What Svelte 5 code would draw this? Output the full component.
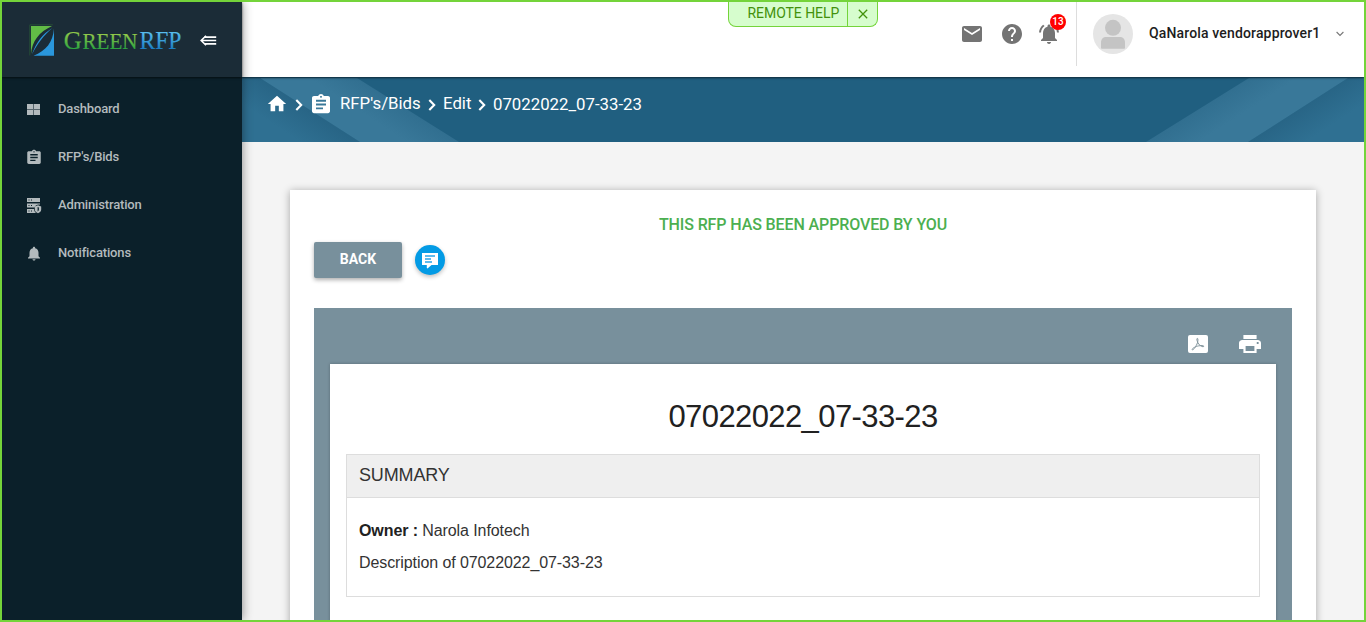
<script>
  const assignment = 'M19 3h-4.18C14.4 1.84 13.3 1 12 1c-1.3 0-2.4.84-2.82 2H5c-1.1 0-2 .9-2 2v14c0 1.1.9 2 2 2h14c1.1 0 2-.9 2-2V5c0-1.1-.9-2-2-2zm-7 0c.55 0 1 .45 1 1s-.45 1-1 1-1-.45-1-1 .45-1 1-1zm2 14H7v-2h7v2zm3-4H7v-2h10v2zm0-4H7V7h10v2z';
  const mail = 'M20 4H4c-1.1 0-1.99.9-1.99 2L2 18c0 1.1.9 2 2 2h16c1.1 0 2-.9 2-2V6c0-1.1-.9-2-2-2zm0 4l-8 5-8-5V6l8 5 8-5v2z';
  const help = 'M12 2C6.48 2 2 6.48 2 12s4.48 10 10 10 10-4.48 10-10S17.52 2 12 2zm1 17h-2v-2h2v2zm2.07-7.75l-.9.92C13.45 12.9 13 13.5 13 15h-2v-.5c0-1.1.45-2.1 1.17-2.83l1.24-1.26c.37-.36.59-.86.59-1.41 0-1.1-.9-2-2-2s-2 .9-2 2H8c0-2.21 1.79-4 4-4s4 1.79 4 4c0 .88-.36 1.68-.93 2.25z';
  const bellActive = 'M7.58 4.08L6.15 2.65C3.75 4.48 2.17 7.3 2.03 10.5h2c.15-2.65 1.51-4.97 3.55-6.42zm12.39 6.42h2c-.15-3.2-1.73-6.02-4.12-7.85l-1.42 1.43c2.02 1.45 3.39 3.77 3.54 6.42zM18 11c0-3.07-1.64-5.64-4.5-6.32V4c0-.83-.67-1.5-1.5-1.5s-1.5.67-1.5 1.5v.68C7.63 5.36 6 7.92 6 11v5l-2 2v1h16v-1l-2-2v-5zm-6 11c.14 0 .27-.01.4-.04.65-.14 1.18-.58 1.44-1.18.1-.24.15-.5.15-.78h-4c.01 1.1.9 2 2.01 2z';
  const bell = 'M12 22c1.1 0 2-.9 2-2h-4c0 1.1.89 2 2 2zm6-6v-5c0-3.07-1.64-5.64-4.5-6.32V4c0-.83-.67-1.5-1.5-1.5s-1.5.67-1.5 1.5v.68C7.63 5.36 6 7.92 6 11v5l-2 2v1h16v-1l-2-2z';
  const print = 'M19 8H5c-1.66 0-3 1.34-3 3v6h4v4h12v-4h4v-6c0-1.66-1.34-3-3-3zm-3 11H8v-5h8v5zm3-7c-.55 0-1-.45-1-1s.45-1 1-1 1 .45 1 1-.45 1-1 1zm-1-9H6v4h12V3z';
  const nav = ['Dashboard', "RFP's/Bids", 'Administration', 'Notifications'];
  const title = '07022022_07-33-23';
</script>

{#snippet chevron()}
  <svg class="chev" width="8" height="12" viewBox="0 0 8 12"><path d="M1.3 1 6.2 6 1.3 11" fill="none" stroke="#fff" stroke-width="2.1" /></svg>
{/snippet}

<div class="frame">
  <aside class="sidebar">
    <div class="brand">
      <svg class="logo" width="162" height="40" viewBox="0 0 162 40">
        <defs>
          <linearGradient id="gg" x1="0" y1="0" x2="0" y2="1"><stop offset=".25" stop-color="#8fc74a" /><stop offset=".8" stop-color="#2ea53f" /></linearGradient>
          <linearGradient id="bg" x1="0" y1="0" x2="0" y2="1"><stop offset=".2" stop-color="#5cc0f0" /><stop offset=".8" stop-color="#1c7fc4" /></linearGradient>
        </defs>
        <path d="M2 2h21C10 8 3 17 2 30z" fill="#62bb46" />
        <path d="M25 4.500v27.200H4.500C17 27 24 18 25 4.500z" fill="#2a97dc" />
        <path d="M3 30.500C7 19 13 10 23.500 4 14.500 11.500 8.500 19.500 3 30.500z" fill="#2a97dc" />
        <path d="M.8 31.500V.8h23" fill="none" stroke="#2d6336" stroke-width=".6" />
        <text x="34.800" y="24.500" fill="url(#gg)" stroke="url(#gg)" font-size="26" textLength="18" lengthAdjust="spacingAndGlyphs">G</text>
        <text x="53.500" y="24.500" fill="url(#gg)" stroke="url(#gg)" font-size="22.500" textLength="55" lengthAdjust="spacingAndGlyphs">REEN</text>
        <text x="110.500" y="24.500" fill="url(#bg)" stroke="url(#bg)" font-size="25.500" textLength="42" lengthAdjust="spacingAndGlyphs">RFP</text>
      </svg>
      <svg class="collapse" width="17" height="12" viewBox="0 0 17 12"><path d="M6 .8 1.2 5.500 6 10.200M4 2.100H16.200M1.500 5.500H16.200M4 8.900H16.200" fill="none" stroke="#fff" stroke-width="1.600" /></svg>
    </div>
    <nav>
      {#each nav as label, i}
        <a class="item" href="#{i}">
          <span class="ico">
            {#if i === 0}
              <svg width="13" height="12" viewBox="0 0 13 12" fill="currentColor"><path d="M0 0h13v11H0z" opacity=".45" /><path d="M0 0h6v5H0zM7 0h6v5H7zM0 6h6v5H0zM7 6h6v5H7z" /></svg>
            {:else if i === 1}
              <svg class="clip" width="18" height="17" viewBox="0 0 24 24" preserveAspectRatio="none" fill="currentColor"><path d={assignment} /></svg>
            {:else if i === 2}
              <svg width="15" height="16" viewBox="0 0 15 16" fill="currentColor"><path fill-rule="evenodd" d="M0 0h13v4H0zM1.500 1.500v1h1v-1zM4 1.500v1h1v-1zM0 5.500h13v1C10.500 6 8.300 7 7.500 9.500H0zM1.500 7v1h1V7zM4 7v1h1V7zM0 11h7c.2 2 1 3 2 4H0zM1.500 12.500v1h1v-1zM4 12.500v1h1v-1zM11 7.300l3.200 1.200v3c0 1.700-1.200 3-3.200 3.800-2-.8-3.200-2.100-3.200-3.800v-3zM10.600 9v4.500c1-.7 1.300-1.300 1.300-2.300V9.500z" /></svg>
            {:else}
              <svg class="bell" width="18" height="17" viewBox="0 0 24 24" preserveAspectRatio="none" fill="currentColor"><path d={bell} /></svg>
            {/if}
          </span>
          <span class="label">{label}</span>
        </a>
      {/each}
    </nav>
  </aside>

  <main>
    <header>
      <div class="actions">
        <svg width="24" height="24" viewBox="0 0 24 24"><path d={mail} /></svg>
        <svg width="24" height="24" viewBox="0 0 24 24"><path d={help} /></svg>
        <span class="alerts"><svg width="24" height="24" viewBox="0 0 24 24"><path d={bellActive} /></svg><b class="badge">13</b></span>
      </div>
      <div class="user">
        <svg width="40" height="40" viewBox="0 0 40 40">
          <circle cx="20" cy="20" r="20" fill="#e5e5e5" />
          <circle cx="20" cy="13.800" r="8" fill="#c4c4c4" />
          <path d="M8 34v-5.500c0-3.500 2-5.500 5.500-5.500h13c3.500 0 5.500 2 5.500 5.500V34q0 .7-.8.7H8.800Q8 34.700 8 34z" fill="#c4c4c4" />
        </svg>
        <span class="name">QaNarola vendorapprover1</span>
        <svg width="8" height="6" viewBox="0 0 8 6"><path d="M.6 1 4 4.500 7.400 1" fill="none" stroke="#777" stroke-width="1.100" /></svg>
      </div>
    </header>

    <div class="banner">
      <svg class="rays" width="1122" height="64" viewBox="0 0 1122 64">
        <defs>
          <linearGradient id="sl" gradientUnits="userSpaceOnUse" x1="66" y1="32" x2="49" y2="58"><stop stop-color="#286586" /><stop offset="1" stop-color="#2f7092" /></linearGradient>
          <linearGradient id="sr" gradientUnits="userSpaceOnUse" x1="1056" y1="32" x2="1073" y2="58"><stop stop-color="#286586" /><stop offset="1" stop-color="#2f7092" /></linearGradient>
          <linearGradient id="tl" gradientUnits="userSpaceOnUse" x1="166" y1="32" x2="151" y2="55"><stop stop-color="#316f90" /><stop offset="1" stop-color="#397899" /></linearGradient>
          <linearGradient id="tr" gradientUnits="userSpaceOnUse" x1="956" y1="32" x2="971" y2="55"><stop stop-color="#316f90" /><stop offset="1" stop-color="#397899" /></linearGradient>
        </defs>
        <path d="M0 0H18L118 64H0z" fill="url(#sl)" />
        <path d="M18 0H115L217 64H118z" fill="url(#tl)" />
        <path d="M1122 0H1106L1006 64H1122z" fill="url(#sr)" />
        <path d="M1007 0H1106L1006 64H904z" fill="url(#tr)" />
      </svg>
      <div class="crumbs">
        <svg class="home" width="22" height="22" viewBox="0 0 24 24" fill="#fff"><path d="M10 20v-6h4v6h5v-8h3L12 3 2 12h3v8z" /></svg>
        {@render chevron()}
        <svg class="doc" width="24" height="23" viewBox="0 0 24 24" preserveAspectRatio="none" fill="#fff"><path d={assignment} /></svg>
        <span class="c1">RFP's/Bids</span>
        {@render chevron()}
        <span class="c2">Edit</span>
        {@render chevron()}
        <span class="c3">{title}</span>
      </div>
    </div>

    <section class="card">
      <div class="approved">THIS RFP HAS BEEN APPROVED BY YOU</div>
      <div class="buttons">
        <button class="back">BACK</button>
        <button class="chat" aria-label="Comments">
          <svg width="16" height="16" viewBox="0 0 16 16"><path d="M0 0h16v12H9.500L5.500 15.500 4.800 15V12H0z" fill="#fff" /><path d="M3 3h10M3 6h6M3 9h7" stroke="#2aa5e8" stroke-width="1.500" /></svg>
        </button>
      </div>
      <div class="viewer">
        <div class="tools">
          <svg width="20" height="18" viewBox="0 0 20 18"><rect width="20" height="18" rx="2" fill="#fff" /><path d="M9.300 3.300C10.300 3.300 10.200 7 8.400 10.200 6.800 13.200 5 15.300 4.200 14.700 3.500 13.800 7 11.600 10.500 10.900 13.500 10.300 16 10.500 15.800 11.400 15.500 12.300 12.500 11.400 10.700 9 9 6.700 8.400 3.600 9.300 3.300z" fill="none" stroke="#82959d" stroke-width="1" /></svg>
          <svg width="22" height="18" viewBox="2 3 20 18" preserveAspectRatio="none" fill="#fff"><path d={print} /></svg>
        </div>
        <article>
          <h1>{title}</h1>
          <div class="summary">
            <h2>SUMMARY</h2>
            <div class="body">
              <p><b>Owner :</b> Narola Infotech</p>
              <p>Description of {title}</p>
            </div>
          </div>
        </article>
      </div>
    </section>
  </main>

  <div class="remote"><span>REMOTE HELP</span><i><svg width="10" height="10" viewBox="0 0 10 10"><path d="M.8.8 9.200 9.200M9.200.8.8 9.200" stroke="#43910c" stroke-width="1.300" /></svg></i></div>
</div>

<style>
  :global(body) { margin: 0; overflow: hidden; }
  .frame, .frame * { box-sizing: border-box; }
  .frame { position: relative; width: 1366px; height: 622px; border: 2px solid #74d43a; display: flex; overflow: hidden; background: #f4f4f4; font-family: Roboto, sans-serif; color: #212121; }
  svg { display: block; flex: none; }
  .sidebar { position: relative; z-index: 2; width: 240px; flex: none; background: #0b202a; box-shadow: 0 0 10px rgba(0,0,0,.45); }
  .brand { height: 75px; background: #1b2c37; box-shadow: 0 1px 2px rgba(0,0,0,.6); display: flex; align-items: flex-start; padding: 22px 0 0 27px; }
  .logo { font-family: "Liberation Serif", serif; stroke-width: .15px; overflow: visible; }
  .collapse { margin: 11px 0 0 9px; }
  nav { padding-top: 7px; }
  .item { height: 48px; display: flex; align-items: center; color: #b3babd; text-decoration: none; font-size: 13px; font-weight: 500; padding-left: 25px; line-height: 16px; }
  .label { padding-top: 2px; letter-spacing: -.15px; }
  .ico { width: 31px; height: 16px; display: flex; align-items: center; margin-top: 3px; }
  .clip { margin-left: -2.5px; }
  .bell { margin-left: -2px; }
  main { width: 1122px; flex: none; display: flex; flex-direction: column; }
  header { height: 75px; flex: none; background: #fff; display: flex; justify-content: flex-end; position: relative; z-index: 1; box-shadow: 0 1px 2px rgba(0,0,0,.6); }
  .actions { display: flex; gap: 16px; padding: 20px 15px 0 0; fill: #747474; }
  .alerts { position: relative; height: 24px; margin-left: -3px; }
  .user { height: 64px; border-left: 1px solid #ddd; width: 288px; display: flex; align-items: center; padding-left: 16px; }
  .name { font-size: 14px; font-weight: 500; width: 172px; margin: -2px 15px 0 16px; color: #1d1d1d; letter-spacing: .15px; white-space: nowrap; }
  .banner { height: 65px; flex: none; background: #205f80; padding-top: 1px; display: grid; }
  .rays, .crumbs { grid-area: 1 / 1; }
  .crumbs { display: flex; align-items: flex-start; color: #fff; font-size: 16.8px; line-height: 20px; padding: 15px 0 0 24px; white-space: nowrap; }
  .home { margin-right: 7px; }
  .chev { margin-top: 6px; }
  .doc { margin: 0 7px 0 6px; }
  .c1 { width: 81px; margin-right: 7px; }
  .c2 { width: 28px; margin: 0 7px 0 7px; }
  .c3 { margin-left: 7px; margin-top: 1px; }
  .card { margin: 48px 48px 0; height: 500px; background: #fff; box-shadow: 0 1px 8px rgba(0,0,0,.32); padding: 25px 24px 0; }
  .approved { height: 27px; line-height: 20px; text-align: center; color: #4caf50; font-weight: 500; font-size: 16px; letter-spacing: -.11px; }
  .buttons { display: flex; gap: 13px; height: 66px; align-items: flex-start; }
  button { border: 0; padding: 0; font-family: inherit; }
  .back { width: 88px; height: 36px; background: #78909c; color: #fff; border-radius: 2px; font-size: 14px; font-weight: 700; padding-bottom: 2px; box-shadow: 0 2px 4px rgba(0,0,0,.32); }
  .chat { width: 30px; height: 30px; border-radius: 50%; background: #039be5; margin-top: 3px; padding-top: 1px; box-shadow: 0 2px 4px rgba(0,0,0,.25); display: flex; align-items: center; justify-content: center; }
  .viewer { background: #78909c; height: 400px; padding: 0 16px; }
  .tools { height: 56px; display: flex; justify-content: flex-end; gap: 31px; padding: 27px 15px 0 0; }
  article { background: #fff; height: 344px; padding: 32px 16px 0; box-shadow: 0 0 3px rgba(0,0,0,.25); font-family: "Liberation Sans", Arial, sans-serif; }
  h1 { margin: 0; font-weight: 400; font-size: 31px; line-height: 42px; height: 58px; text-align: center; letter-spacing: -.6px; }
  .summary { height: 143px; border: 1px solid #ddd; }
  h2 { margin: 0; height: 43px; border-bottom: 1px solid #ddd; background: #efefef; font-size: 18px; line-height: 41px; font-weight: 400; padding-left: 12px; color: #333; letter-spacing: -.15px; }
  .body { padding: 17px 12px; font-size: 16px; line-height: 32px; color: #333; letter-spacing: -.09px; }
  p { margin: 0; }
  b { color: #212121; }
  .badge { position: absolute; left: 13px; top: -8px; width: 16px; height: 16px; border-radius: 50%; background: #f00; color: #fff; font-size: 10px; line-height: 16px; text-align: center; font-weight: 500; }
  .remote { position: absolute; z-index: 3; left: 726px; top: -1px; height: 26px; width: 150px; border: 1px solid #74d43a; border-top: 0; border-radius: 0 0 8px 8px; background: #d6fdcd; color: #43910c; display: flex; font-size: 14px; line-height: 25px; }
  .remote span { width: 119px; padding-left: 18.5px; white-space: nowrap; border-right: 1px solid #74d43a; letter-spacing: -.05px; }
  .remote i { flex: 1; display: flex; align-items: center; justify-content: center; }
</style>
